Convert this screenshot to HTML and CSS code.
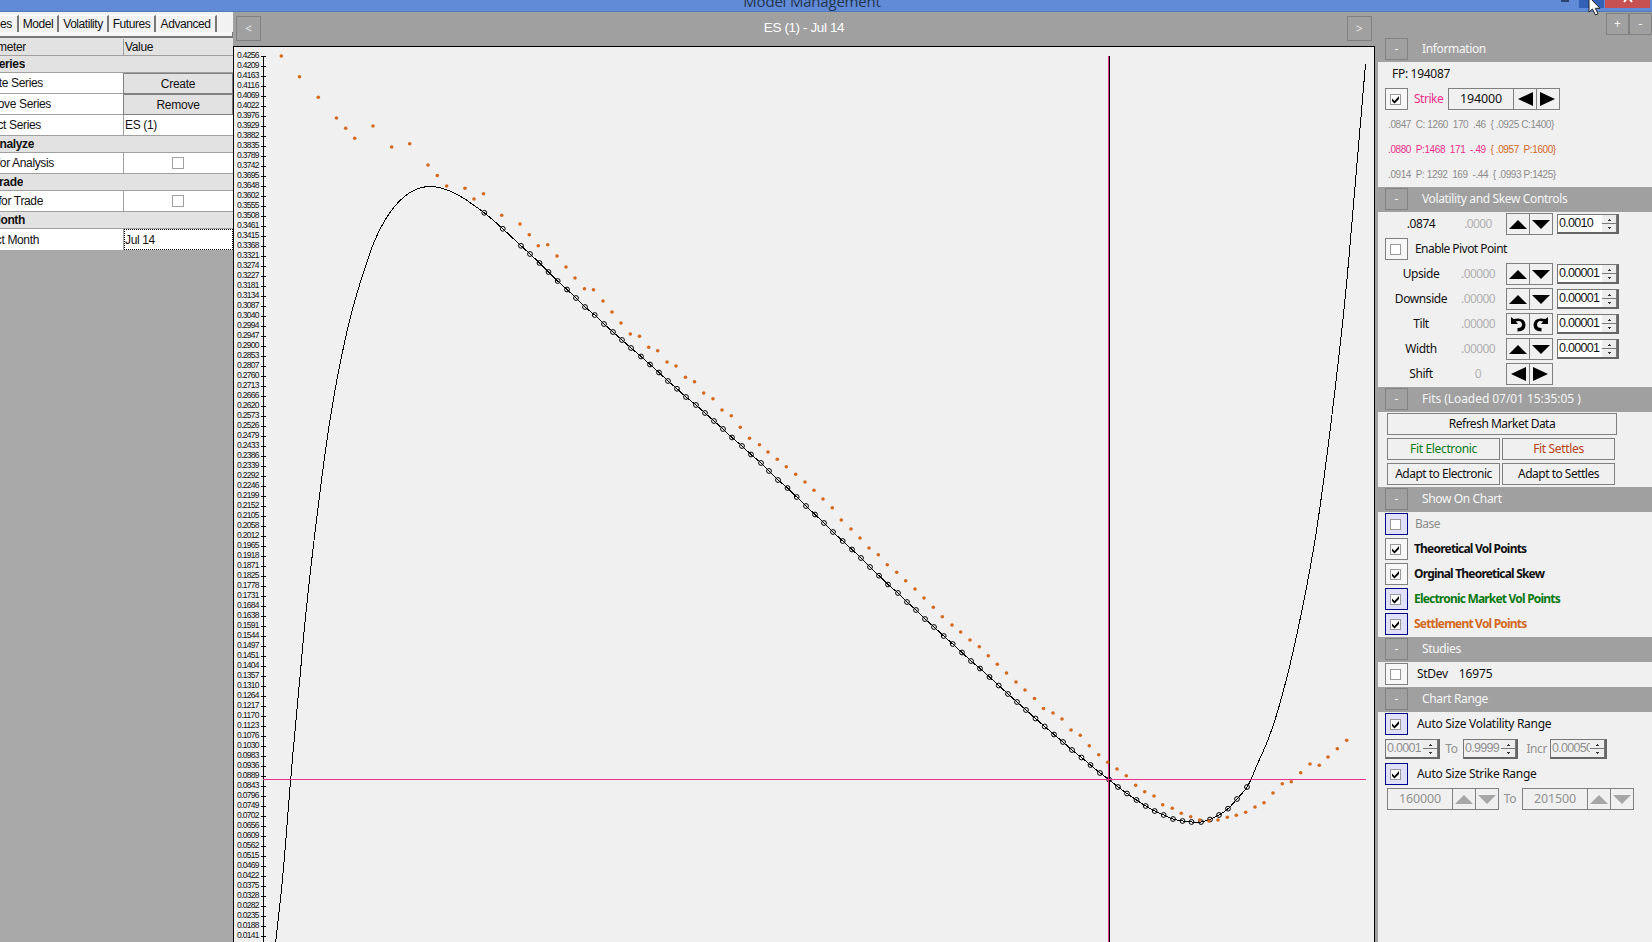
FILE: index.html
```html
<!DOCTYPE html>
<html lang="en">
<head>
<meta charset="utf-8">
<title>Model Management</title>
<link rel="stylesheet" href="styles.css">
</head>
<body>
<svg class="defs" width="0" height="0">
  <symbol id="up" viewBox="0 0 20 20"><path d="M10 6L19 15H1Z"/></symbol>
  <symbol id="down" viewBox="0 0 20 20"><path d="M1 6H19L10 15Z"/></symbol>
  <symbol id="left" viewBox="0 0 20 20"><path d="M3 10L18 3V17Z"/></symbol>
  <symbol id="right" viewBox="0 0 20 20"><path d="M17 10L2 3V17Z"/></symbol>
  <symbol id="ccw" viewBox="0 0 20 20"><path d="M3 3L3 10L10 10L7.8 7.6Q13.5 5.5 14 10.5Q14 14 9.500 14V17.500Q17.500 17.500 17.500 10.500Q16.500 2.500 5.500 5Z"/></symbol>
  <symbol id="cw" viewBox="0 0 20 20"><path d="M17 3L17 10L10 10L12.200 7.600Q6.500 5.500 6 10.500Q6 14 10.500 14V17.500Q2.500 17.500 2.500 10.500Q3.500 2.500 14.500 5Z"/></symbol>
  <symbol id="tick" viewBox="0 0 9 9"><path d="M1 3.500L3.500 6L8 1V4L3.500 8.500L1 6Z"/></symbol>
</svg>
<header class="titlebar">
  <span class="title">Model Management</span>
  <div class="winbtns"><i class="min"></i><i class="max"></i><i class="close"><svg width="10" height="6" viewBox="0 0 10 6"><path d="M1 5L5 0L9 5" fill="none" stroke="#fff" stroke-width="2"/></svg></i></div>
  <svg class="cursor" width="14" height="18" viewBox="0 0 14 18"><path d="M1 -3V12L4.500 9L7.500 15L10 13.800L7.300 8.300H12Z" fill="#fff" stroke="#222"/></svg>
</header>
<main class="body">
  <aside class="left">
    <nav class="tabs"><span class="tab t1">es</span><span class="tab t2">Model</span><span class="tab t3">Volatility</span><span class="tab t4">Futures</span><span class="tab t5">Advanced</span></nav>
    <div class="tabline"></div>
    <div class="prow head"><div class="pname"><span class="e26">meter</span></div><div class="pval">Value</div></div>
    <div class="prow group"><span class="e25">eries</span></div>
    <div class="prow"><div class="pname"><span class="e43">te Series</span></div><button class="pbtn">Create</button></div>
    <div class="prow"><div class="pname"><span class="e51">ove Series</span></div><button class="pbtn">Remove</button></div>
    <div class="prow"><div class="pname"><span class="e41">ct Series</span></div><div class="pval">ES (1)</div></div>
    <div class="prow group"><span class="e34">nalyze</span></div>
    <div class="prow"><div class="pname"><span class="e54">for Analysis</span></div><div class="pval mid"><i class="pcheck"></i></div></div>
    <div class="prow group"><span class="e23">rade</span></div>
    <div class="prow"><div class="pname"><span class="e43">for Trade</span></div><div class="pval mid"><i class="pcheck"></i></div></div>
    <div class="prow group"><span class="e25">Month</span></div>
    <div class="prow last"><div class="pname"><span class="e39">ct Month</span></div><div class="pval focus">Jul 14</div></div>
  </aside>
  <section class="center">
    <div class="chead"><button class="nav">&lt;</button><span class="ctitle">ES (1) - Jul 14</span><button class="nav">&gt;</button></div>
    <div class="frame"><svg id="chart" width="1140" height="895" viewBox="234 47 1140 895"></svg></div>
  </section>
  <aside class="right">
    <div class="pm"><button class="sq">+</button><button class="sq">-</button></div>
    <div class="sect"><button class="sq">-</button><span>Information</span></div>
    <div class="row"><span class="fp">FP: 194087</span></div>
    <div class="row"><i class="cb on"><b><svg><use href="#tick"/></svg></b></i><span class="strike">Strike</span><span class="num first">194000</span><button class="ar"><svg><use href="#left"/></svg></button><button class="ar"><svg><use href="#right"/></svg></button></div>
    <div class="row quote"><span class="q1">.0847  C: 1260  170  .46  { .0925 C:1400}</span></div>
    <div class="row quote"><span class="q2 pink">.0880  P:1468  171  -.49  <span class="orange">{ .0957  P:1600}</span></span></div>
    <div class="row quote"><span class="q1">.0914  P: 1292  169  -.44  { .0993 P:1425}</span></div>

    <div class="sect"><button class="sq">-</button><span>Volatility and Skew Controls</span></div>
    <div class="row"><span class="lab">.0874</span><span class="dim">.0000</span><button class="ar"><svg><use href="#up"/></svg></button><button class="ar"><svg><use href="#down"/></svg></button><span class="spin"><em>0.0010</em><i></i></span></div>
    <div class="row"><i class="cb"><b></b></i><span class="cl">Enable Pivot Point</span></div>
    <div class="row"><span class="lab">Upside</span><span class="dim">.00000</span><button class="ar"><svg><use href="#up"/></svg></button><button class="ar"><svg><use href="#down"/></svg></button><span class="spin"><em>0.00001</em><i></i></span></div>
    <div class="row"><span class="lab">Downside</span><span class="dim">.00000</span><button class="ar"><svg><use href="#up"/></svg></button><button class="ar"><svg><use href="#down"/></svg></button><span class="spin"><em>0.00001</em><i></i></span></div>
    <div class="row"><span class="lab">Tilt</span><span class="dim">.00000</span><button class="ar"><svg><use href="#ccw"/></svg></button><button class="ar"><svg><use href="#cw"/></svg></button><span class="spin"><em>0.00001</em><i></i></span></div>
    <div class="row"><span class="lab">Width</span><span class="dim">.00000</span><button class="ar"><svg><use href="#up"/></svg></button><button class="ar"><svg><use href="#down"/></svg></button><span class="spin"><em>0.00001</em><i></i></span></div>
    <div class="row"><span class="lab">Shift</span><span class="dim">0</span><button class="ar"><svg><use href="#left"/></svg></button><button class="ar"><svg><use href="#right"/></svg></button></div>

    <div class="sect loose"><button class="sq">-</button><span>Fits (Loaded 07/01 15:35:05 )</span></div>
    <div class="row fits"><button class="wide">Refresh Market Data</button></div>
    <div class="row fits"><button class="half green">Fit Electronic</button><button class="half rust">Fit Settles</button></div>
    <div class="row fits"><button class="half">Adapt to Electronic</button><button class="half">Adapt to Settles</button></div>

    <div class="sect"><button class="sq">-</button><span>Show On Chart</span></div>
    <div class="row"><i class="cb blue"><b></b></i><span class="cl gray">Base</span></div>
    <div class="row"><i class="cb"><b><svg><use href="#tick"/></svg></b></i><span class="cl bold">Theoretical Vol Points</span></div>
    <div class="row"><i class="cb"><b><svg><use href="#tick"/></svg></b></i><span class="cl bold">Orginal Theoretical Skew</span></div>
    <div class="row"><i class="cb blue"><b><svg><use href="#tick"/></svg></b></i><span class="cl bold green">Electronic Market Vol Points</span></div>
    <div class="row"><i class="cb blue"><b><svg><use href="#tick"/></svg></b></i><span class="cl bold orange">Settlement Vol Points</span></div>

    <div class="sect"><button class="sq">-</button><span>Studies</span></div>
    <div class="row"><i class="cb"><b></b></i><span class="cl far">StDev</span><span class="stdev">16975</span></div>

    <div class="sect"><button class="sq">-</button><span>Chart Range</span></div>
    <div class="row"><i class="cb blue"><b><svg><use href="#tick"/></svg></b></i><span class="cl far">Auto Size Volatility Range</span></div>
    <div class="row off"><span class="spin s1"><em>0.0001</em><i></i></span><span class="to">To</span><span class="spin s1"><em>0.9999</em><i></i></span><span class="incr">Incr</span><span class="spin s2"><em>0.00050</em><i></i></span></div>
    <div class="row"><i class="cb blue"><b><svg><use href="#tick"/></svg></b></i><span class="cl far">Auto Size Strike Range</span></div>
    <div class="row off fits"><span class="num">160000</span><button class="ar"><svg><use href="#up"/></svg></button><button class="ar"><svg><use href="#down"/></svg></button><span class="to">To</span><span class="num">201500</span><button class="ar"><svg><use href="#up"/></svg></button><button class="ar"><svg><use href="#down"/></svg></button></div>
  </aside>
</main>
<script src="chart.js"></script>
</body>
</html>
```

FILE: styles.css
```css
* { box-sizing: border-box; }
body { margin: 0; width: 1652px; height: 942px; overflow: hidden; background: #a9a9a9; font: 12px "Noto Sans", sans-serif; color: #111; }
button { font: inherit; color: inherit; padding: 0; margin: 0; background: none; border: 1px solid #808080; border-radius: 0; }
.defs { display: block; position: absolute; }
i, em { font-style: normal; }

.titlebar { position: relative; z-index: 2; display: flex; align-items: flex-end; height: 12px; background: #618bd6; border-bottom: 1px solid #5479bd; }
.title { width: 1624px; text-align: center; font: 15px/20px "Open Sans", sans-serif; letter-spacing: -.2px; color: #24344f; }
.winbtns { position: absolute; right: 2px; top: 0; display: flex; align-items: flex-start; }
.min { width: 8px; height: 2px; background: #2d4470; margin-right: 10px; }
.max { width: 25px; height: 8px; background: #3261b5; margin-right: 1px; }
.close { width: 45px; height: 8px; background: #c75050; display: flex; justify-content: center; align-items: flex-start; }
.close svg { margin-top: -3px; }
.cursor { position: absolute; left: 1588px; top: 0; overflow: visible; }

.body { display: flex; height: 930px; }
.left { width: 233px; background: #a9a9a9; font: 12px/14px "Liberation Sans", Arial, sans-serif; letter-spacing: -.35px; }
.tabs { display: flex; height: 20px; background: #f2f2f2; padding-top: 3px; }
.tab { height: 17px; line-height: 17px; border-right: 2px solid #777; text-align: center; border-top: 1px solid #fff; letter-spacing: -.45px; }
.t1 { width: 19px; text-align: left; }
.t2 { width: 40px; } .t3 { width: 50px; } .t4 { width: 47px; } .t5 { width: 61px; }
.tabline { height: 6px; background: #f7f7f7; border-right: 1px solid #777; border-bottom: 2px solid #777; }
.prow { display: flex; height: 21px; border-bottom: 1px solid #a0a0a0; background: #fff; }
.prow.head { height: 18px; background: #e2e2e2; border-top: 1px solid #e2e2e2; }
.prow.group { height: 17px; background: #e2e2e2; font-weight: bold; align-items: center; }
.prow.last { height: 21px; border: 0; }
.prow span { display: flex; justify-content: flex-end; overflow: hidden; white-space: nowrap; }
.pname { width: 124px; border-right: 1px solid #a0a0a0; display: flex; align-items: center; }
.pval { flex: 1; display: flex; align-items: center; padding-left: 1px; }
.mid { justify-content: center; padding: 0 2px 0 0; }
.pcheck { width: 12px; height: 12px; border: 1px solid #a0a0a0; background: #fff; }
.pbtn { flex: 1; background: #e2e2e2; margin: 0 0 -1px -1px; border: 1px solid #808080; letter-spacing: -.25px; }
.focus { border: 1px dotted #000; padding-left: 0; }
.e23 { width: 23px; } .e25 { width: 25px; } .e26 { width: 26px; } .e34 { width: 34px; } .e39 { width: 39px; }
.e41 { width: 41px; } .e43 { width: 43px; } .e51 { width: 51px; } .e54 { width: 54px; }

.center { width: 1142px; background: #a0a0a0; }
.chead { height: 34px; display: flex; align-items: center; justify-content: space-between; padding: 1px 3px 4px; color: #fff; }
.nav { width: 25px; height: 25px; margin-top: 1px; color: #e8e8e8; }
.ctitle { font: 13.5px "Liberation Sans", Arial, sans-serif; letter-spacing: -.4px; }
.frame { height: 896px; border: 1px solid #000; border-bottom: 0; background: #f0f0f0; }
.frame svg { display: block; }
.axis { font: 8.5px "Liberation Sans", Arial, sans-serif; fill: #111; }

.right { width: 277px; background: #f0f0f0; border-left: 3px solid #a0a0a0; }
.pm { height: 25px; background: #a0a0a0; display: flex; justify-content: flex-end; padding-top: 1px; color: #fff; }
.sq { width: 23px; height: 22px; line-height: 18px; color: #f4f4f4; border-color: #828282; }
.sect { height: 25px; background: #a0a0a0; color: #f6f6f6; display: flex; padding: 1px 0 0 7px; line-height: 22px; letter-spacing: -.36px; }
.sect.loose { letter-spacing: -.06px; }
.sect span { margin-left: 14px; }
.row { height: 25px; display: flex; padding: 1px 0 0 7px; line-height: 21px; white-space: nowrap; letter-spacing: -.4px; }
.fp { margin-left: 7px; letter-spacing: -.3px; }
.cb { width: 23px; height: 22px; border: 1px solid #808080; background: #f7f7f7; padding: 4px; flex: none; }
.cb b { display: flex; width: 11px; height: 11px; border: 1px solid #999; background: #fff; margin: 1px 0 0 0; }
.cb svg { width: 9px; height: 9px; display: block; }
.cb.blue { border-color: #00008b; background: #e0e0fa; }
.strike { margin-left: 6px; width: 34px; color: #e8308c; letter-spacing: -.5px; }
.num { width: 66px; height: 22px; border: 1px solid #808080; text-align: center; font-size: 12.5px; line-height: 19px; letter-spacing: -.15px; margin-right: -1px; }
.ar { width: 24px; height: 22px; margin-right: -1px; display: flex; align-items: center; justify-content: center; flex: none; }
.ar svg { width: 20px; height: 20px; fill: #000; }
.quote { font: 10px/24px "Liberation Sans", Arial, sans-serif; white-space: pre; color: #8c8c8c; letter-spacing: -.4px; }
.quote > span { margin-left: 3px; white-space: pre; }
.pink { color: #e8308c; }
.orange { color: #d2691e; }
.lab { width: 72px; text-align: center; }
.dim { width: 42px; margin-right: 7px; text-align: center; color: #b0b0b0; letter-spacing: -.6px; }
.spin { display: flex; width: 62px; height: 20px; margin: 1px 0 0 5px; border: 1px solid #777; border-right: 2px solid #666; border-bottom: 2px solid #666; background: #fff; overflow: hidden; padding-left: 1px; }
.spin em { flex: 1; width: 0; overflow: hidden; font: 12.5px/17px "Liberation Sans", Arial, sans-serif; letter-spacing: -.7px; }
.spin i { width: 15px; background:
  linear-gradient(#333, #333) 7px 4px / 1px 1px no-repeat, linear-gradient(#333, #333) 6px 5px / 3px 1px no-repeat,
  linear-gradient(#333, #333) 6px 12px / 3px 1px no-repeat, linear-gradient(#333, #333) 7px 13px / 1px 1px no-repeat,
  linear-gradient(#777, #777) 0 8px / 15px 1px no-repeat, #ededed; border-right: 1px solid #777; }
.cl { margin-left: 7px; letter-spacing: -.55px; }
.far { margin-left: 9px; letter-spacing: -.3px; }
.bold { font-weight: bold; letter-spacing: -.8px; margin-left: 6px; }
.gray { color: #8c8c8c; }
.green { color: #0a7a14; }
.rust { color: #b84317; }
.fits { padding-left: 9px; }
.fits button { line-height: 18px; }
.wide { width: 230px; height: 22px; letter-spacing: -.5px; }
.half { width: 113px; height: 22px; margin-right: 2px; letter-spacing: -.5px; }
.half.green, .half.rust { letter-spacing: -.35px; }
.stdev { margin-left: 11px; letter-spacing: -.1px; }
.off { color: #909090; }
.off .ar svg { fill: #a6a6a6; }
.off .spin { background: #f0f0f0; }
.off .s1 { width: 55px; margin-left: 0; }
.off .s2 { width: 57px; margin-left: 0; }
.to { width: 23px; text-align: center; }
.off.fits .to { width: 24px; }
.incr { width: 32px; text-align: right; padding-right: 3px; }
```

FILE: chart.js
```js
const NS = 'http://www.w3.org/2000/svg';
const chart = document.getElementById('chart');
function add(tag, attrs, text) {
  const el = document.createElementNS(NS, tag);
  for (const k in attrs) el.setAttribute(k, attrs[k]);
  if (text) el.textContent = text;
  chart.appendChild(el);
}
const labels = '4256 4209 4163 4116 4069 4022 3976 3929 3882 3835 3789 3742 3695 3648 3602 3555 3508 3461 3415 3368 3321 3274 3227 3181 3134 3087 3040 2994 2947 2900 2853 2807 2760 2713 2666 2620 2573 2526 2479 2433 2386 2339 2292 2246 2199 2152 2105 2058 2012 1965 1918 1871 1825 1778 1731 1684 1638 1591 1544 1497 1451 1404 1357 1310 1264 1217 1170 1123 1076 1030 0983 0936 0889 0843 0796 0749 0702 0656 0609 0562 0515 0469 0422 0375 0328 0282 0235 0188 0141'.split(' ');
labels.forEach((v, i) => {
  add('text', { x: 237, y: 58 + i * 10, class: 'axis', textLength: 22.5 }, '0.' + v);
  add('rect', { x: 261, y: 56 + i * 10, width: 5, height: 1 });
});
add('rect', { x: 263, y: 56, width: 1, height: 890 });

const rise = [[275.7,942],[281.7,887],[285.7,842],[288,812],[292.7,756],[299.7,680],[306,612],[313,549],[321,484],[330,420],[341,359],[352,311],[364.3,270],[373.3,244],[381.7,226],[390,212.5],[397,203.7],[404,197],[411.7,191.5],[420,188],[430,186.5],[443.3,188.7],[463.3,198],[473,204.7]];
const points = [[484.3,212.8],[502.8,228.8],[521,245.8],[530,254],[539.5,263],[548.5,272],[557.7,281],[567,289.5],[576,298],[585,307],[594.7,315],[604,324],[613,332],[622,340],[631,348],[641,356.5],[650,364.5],[659,372.5],[668,381],[677,388.8],[686,397],[696,405],[705,413],[714,421],[723,429],[732,437.5],[742,446],[751,454.5],[761,463],[769,471],[778,480],[787.5,488],[796.7,497],[806,506],[815,514.5],[824,523],[833,532],[842.7,541],[852,549.5],[861,558],[870,567],[879,575.7],[888,584.5],[898,593],[907,602],[916,610],[925,619],[934,627],[943.7,636],[952.7,644],[962,652.5],[971,661],[980,668.5],[989.5,677],[998.7,685.5],[1008,694],[1017,702],[1026,710],[1035.5,718.5],[1044.7,726.5],[1054,734.5],[1063,742],[1072,750],[1081.5,757.5],[1090.5,765],[1100,773],[1109,779.5],[1118,787],[1127,793.5],[1136.5,800],[1145.7,806],[1154.7,811],[1163.7,815],[1173,819],[1182.5,821],[1191.5,822],[1201,822],[1210,819.5],[1219,815],[1228,808.7],[1237,799],[1247,787]];
const fall = [[1257,765],[1266.7,743],[1273.3,725],[1278.3,709],[1283.3,691],[1288.3,671.7],[1296.3,637],[1306,590],[1315,540],[1323.3,483],[1331,423],[1337.3,370],[1343.3,316.7],[1349,256.7],[1353.3,206.7],[1357.3,160],[1361.3,113.3],[1365.5,64]];
const settles = [[281.3,56],[299.5,76.7],[318.3,97.3],[336.5,118],[345.7,128.3],[354.7,138.3],[373,126],[391.7,147],[409.7,143.7],[428,165],[437.3,175.5],[446.7,186],[465,188.3],[474,199],[483.5,193.7],[501.7,215.3],[520,224],[529.3,234.7],[538.3,245.7],[547.7,244.7],[557,256],[566,267],[575,278],[584.5,288.7],[593.5,289.7],[603,301],[612,312],[621,323],[630.3,334],[639.5,336.3],[648.7,347.3],[657.7,350.7],[667,362],[676,366],[685.5,377.3],[694.5,381.7],[703.7,393],[713,398.7],[722,410],[731.3,415.7],[740.3,427.3],[749.5,438.3],[759.5,444.7],[768,452],[777.3,459.3],[786.3,466.7],[795.7,474.3],[805,482],[814,490.3],[823,499],[832.3,507.7],[841.3,520],[851,529],[860,538],[869,548],[878.3,554.7],[887.3,564.7],[896.7,572.3],[905.7,580.7],[915,589],[924,598],[933.3,607.3],[942.3,616.7],[952,625],[960.7,632],[970,640],[979.3,646.7],[988.3,655.7],[997.3,664.3],[1006.5,673],[1016,682],[1025,690],[1034.5,698.5],[1043.5,708.5],[1053,713],[1062,719],[1071,730],[1080.3,735.3],[1089.3,745.7],[1098.7,754.7],[1107.7,762.3],[1117,769],[1126.3,775.7],[1135.7,785.3],[1144.7,791.7],[1154,796],[1162.7,804.7],[1172.3,808.3],[1181.3,813.3],[1190.7,816.7],[1199.7,820],[1209,821],[1218,820],[1227.3,817.3],[1236.3,815.3],[1245.7,812.3],[1255,807],[1264,802.7],[1273,793],[1282.3,783.7],[1291.3,781.7],[1300.7,772.7],[1310,764],[1319.3,765.3],[1328,757],[1337.3,748.7],[1346.7,740.3]];

// Spline through all vertices, with tangents weighted by chord length.
const line = rise.concat(points, fall);
const dist = (a, b) => Math.hypot(b[0] - a[0], b[1] - a[1]) || 1;
const tangent = i => {
  const a = line[Math.max(i - 1, 0)], b = line[i], c = line[Math.min(i + 1, line.length - 1)];
  if (a === b || b === c) return [0, 1].map(k => (c[k] - a[k]) / dist(a, c));
  const p = dist(a, b), q = dist(b, c);
  return [0, 1].map(k => ((b[k] - a[k]) / p * q + (c[k] - b[k]) / q * p) / (p + q));
};
let d = 'M' + line[0];
for (let i = 0; i < line.length - 1; i++) {
  const b = line[i], c = line[i + 1], h = dist(b, c) / 3, m = tangent(i), n = tangent(i + 1);
  d += `C${b[0] + m[0] * h},${b[1] + m[1] * h} ${c[0] - n[0] * h},${c[1] - n[1] * h} ${c[0]},${c[1]}`;
}
add('path', { d, fill: 'none', stroke: '#000', 'stroke-width': 1, 'shape-rendering': 'crispEdges' });
points.forEach(p => add('circle', { cx: p[0], cy: p[1], r: 2.4, fill: 'none', stroke: '#000', 'stroke-width': 1 }));
add('rect', { x: 1109, y: 56, width: 1, height: 890, fill: '#000' });
add('rect', { x: 1108, y: 56, width: 1, height: 890, fill: '#e8308c' });
add('rect', { x: 263, y: 779, width: 1103, height: 1, fill: '#e8308c' });
settles.forEach(p => add('circle', { cx: p[0], cy: p[1], r: 1.8, fill: '#d2691e' }));
```
